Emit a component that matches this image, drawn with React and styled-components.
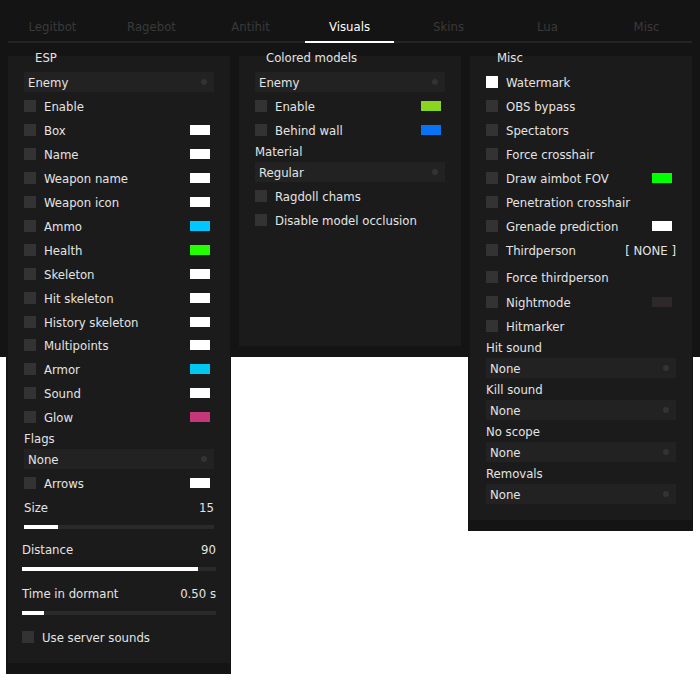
import React from 'react';
import styled, { createGlobalStyle } from 'styled-components';

const Global = createGlobalStyle`
  html, body { margin: 0; padding: 0; background: #ffffff; }
  body {
    font-family: "DejaVu Sans Condensed", "DejaVu Sans", Verdana, sans-serif;
    font-stretch: condensed;
    font-size: 13px;
    color: #e4e4e4;
  }
  * { box-sizing: border-box; }
`;

const Window = styled.div`
  width: 700px;
  background: linear-gradient(#141414, #141414) top left / 100% 357px no-repeat;
`;

const TabRow = styled.div`
  position: relative;
  height: 43px;
  display: flex;
  padding-left: 3px;
  &::after {
    content: '';
    position: absolute;
    left: 8px;
    right: 8px;
    bottom: 0;
    height: 2px;
    background: #242424;
  }
`;

const Tab = styled.div`
  position: relative;
  width: 99px;
  height: 43px;
  padding-top: 19px;
  line-height: 16px;
  text-align: center;
  color: ${(p) => (p.$active ? '#ffffff' : '#3a3a3a')};
  &::after {
    content: '';
    display: ${(p) => (p.$active ? 'block' : 'none')};
    position: absolute;
    left: 5px;
    right: 5px;
    bottom: 0;
    height: 2px;
    background: #ffffff;
    z-index: 1;
  }
`;

const Columns = styled.div`
  display: flex;
  align-items: flex-start;
  gap: 6px;
  padding-left: 6px;
  margin-top: 13px;
`;

const ColumnFrame = styled.div`
  background: #141414;
  padding: 0 1px 11px 2px;
`;

const Panel = styled.div`
  position: relative;
  width: 222px;
  min-height: 290px;
  background: #1b1b1b;
  padding: 16px;
  display: flex;
  flex-direction: column;
  gap: 4px;
`;

const Title = styled.div`
  position: absolute;
  left: 27px;
  top: -6px;
  line-height: 16px;
  color: #e4e4e4;
`;

const Dropdown = styled.div`
  height: 20px;
  background: #222222;
  padding: 2px 7px 0 4px;
  display: flex;
  align-items: center;
  justify-content: space-between;
  line-height: 18px;
`;

const Dot = styled.span`
  width: 6px;
  height: 6px;
  margin-top: -2px;
  border-radius: 50%;
  background: #333333;
`;

const Row = styled.div`
  height: 20px;
  display: flex;
  align-items: center;
  gap: 8px;
  margin: ${(p) => p.$margin || '0'};
`;

const Box = styled.span`
  flex: none;
  width: 12px;
  height: 12px;
  background: ${(p) => (p.$checked ? '#ffffff' : '#333333')};
`;

const RowLabel = styled.span`
  flex: 1;
  white-space: nowrap;
  line-height: 18px;
  padding-top: 2px;
`;

const Swatch = styled.span`
  flex: none;
  width: 20px;
  height: 10px;
  margin-right: 4px;
  background: ${(p) => p.$color};
`;

const Keybind = styled.span`
  flex: none;
  white-space: nowrap;
  line-height: 18px;
  padding-top: 2px;
`;

const Label = styled.div`
  height: 14px;
  line-height: 14px;
  padding-top: 1px;
`;

const SliderBlock = styled.div`
  display: flex;
  flex-direction: column;
  margin: ${(p) => p.$margin || '0'};
`;

const SliderHead = styled.div`
  height: 20px;
  line-height: 18px;
  padding-top: 2px;
  display: flex;
  justify-content: space-between;
`;

const Track = styled.div`
  height: 4px;
  margin-top: 8px;
  background: #2a2a2a;
`;

const Fill = styled.div`
  height: 100%;
  background: #ffffff;
`;

function Check({ label, color, checked, keybind, margin }) {
  return (
    <Row $margin={margin}>
      <Box $checked={checked} />
      <RowLabel>{label}</RowLabel>
      {color && <Swatch $color={color} />}
      {keybind && <Keybind>{keybind}</Keybind>}
    </Row>
  );
}

function Select({ value }) {
  return (
    <Dropdown>
      <span>{value}</span>
      <Dot />
    </Dropdown>
  );
}

function Slider({ label, value, fill, margin }) {
  return (
    <SliderBlock $margin={margin}>
      <SliderHead>
        <span>{label}</span>
        <span>{value}</span>
      </SliderHead>
      <Track>
        <Fill style={{ width: `${fill}%` }} />
      </Track>
    </SliderBlock>
  );
}

const tabs = ['Legitbot', 'Ragebot', 'Antihit', 'Visuals', 'Skins', 'Lua', 'Misc'];

const espRows = [
  ['Box', '#ffffff'],
  ['Name', '#ffffff'],
  ['Weapon name', '#ffffff'],
  ['Weapon icon', '#ffffff'],
  ['Ammo', '#00c8ff'],
  ['Health', '#22ff00'],
  ['Skeleton', '#ffffff'],
  ['Hit skeleton', '#ffffff'],
  ['History skeleton', '#ffffff'],
  ['Multipoints', '#ffffff', '-1px 0 0'],
  ['Armor', '#00c8f0'],
  ['Sound', '#ffffff'],
  ['Glow', '#c6377a'],
];

export default function App() {
  return (
    <>
      <Global />
      <Window>
        <TabRow>
          {tabs.map((t) => (
            <Tab key={t} $active={t === 'Visuals'}>
              {t}
            </Tab>
          ))}
        </TabRow>
        <Columns>
          <ColumnFrame>
            <Panel>
              <Title>ESP</Title>
              <Select value="Enemy" />
              <Check label="Enable" />
              {espRows.map(([l, c, m]) => (
                <Check key={l} label={l} color={c} margin={m} />
              ))}
              <Label>Flags</Label>
              <Select value="None" />
              <Check label="Arrows" color="#ffffff" />
              <Slider label="Size" value="15" fill={18} />
              <Slider label="Distance" value="90" fill={90.7} margin="6px -2px 0" />
              <Slider label="Time in dormant" value="0.50 s" fill={11.3} margin="8px -2px 0" />
              <Check label="Use server sounds" margin="8px -2px 0" />
            </Panel>
          </ColumnFrame>
          <ColumnFrame>
            <Panel>
              <Title>Colored models</Title>
              <Select value="Enemy" />
              <Check label="Enable" color="#8ad61f" />
              <Check label="Behind wall" color="#0873f3" />
              <Label>Material</Label>
              <Select value="Regular" />
              <Check label="Ragdoll chams" />
              <Check label="Disable model occlusion" />
            </Panel>
          </ColumnFrame>
          <ColumnFrame>
            <Panel>
              <Title>Misc</Title>
              <Check label="Watermark" checked />
              <Check label="OBS bypass" />
              <Check label="Spectators" />
              <Check label="Force crosshair" />
              <Check label="Draw aimbot FOV" color="#00ff00" />
              <Check label="Penetration crosshair" />
              <Check label="Grenade prediction" color="#ffffff" />
              <Check label="Thirdperson" keybind="[ NONE ]" margin="0 0 3px" />
              <Check label="Force thirdperson" margin="0 0 1px" />
              <Check label="Nightmode" color="#2e2828" />
              <Check label="Hitmarker" />
              <Label>Hit sound</Label>
              <Select value="None" />
              <Label>Kill sound</Label>
              <Select value="None" />
              <Label>No scope</Label>
              <Select value="None" />
              <Label>Removals</Label>
              <Select value="None" />
            </Panel>
          </ColumnFrame>
        </Columns>
      </Window>
    </>
  );
}
